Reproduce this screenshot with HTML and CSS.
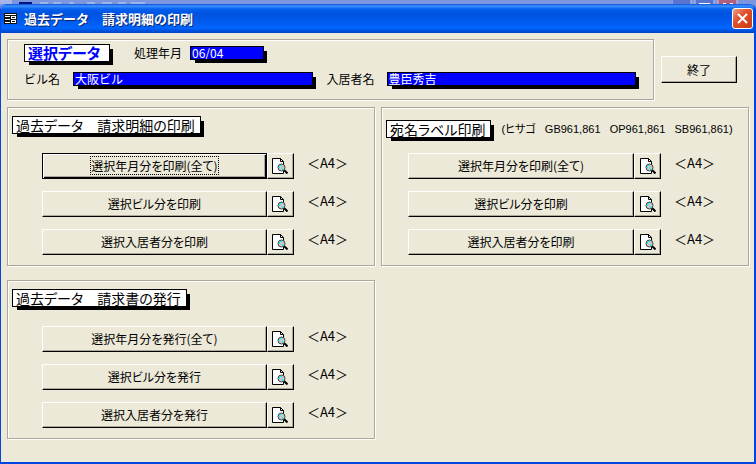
FILE: index.html
```
<!DOCTYPE html>
<html lang="ja">

<head>
    <meta charset="UTF-8">
    <meta name="viewport" content="width=device-width, initial-scale=1.0">
    <title>過去データ 請求明細の印刷</title>
    <link rel="stylesheet" href="styles.css">
</head>

<body>
    <!-- shared icon -->
    <svg class="defs" width="0" height="0">
        <symbol id="preview" viewBox="0 0 16 16">
            <path d="M.5.5h8l3 3v12H.5z" fill="#fff" stroke="#000" />
            <path d="M8.5.5v3h3" fill="none" stroke="#000" />
            <path d="M12 12l3.500 3.500" stroke="#000" stroke-width="2" />
            <circle cx="9.500" cy="9.500" r="3.500" fill="#c8c8c8" stroke="#404040" />
            <path d="M8 7h2v1H8zM7 8h1v2H7zM10 10h1v2h-1z" fill="#00ffff" />
        </symbol>
    </svg>

    <div class="back">
        <svg width="100%" height="4">
            <rect width="12" height="4" fill="#a6b4e8" />
            <rect x="19" y="2" width="13" height="2" fill="#00157f" />
            <path d="M40 3h8M53 3h8M69 3h5M87 3h8M102 3h10M118 3h8M131 3h14" stroke="#c4d0f4" />
        </svg>
        <svg class="back_buttons" width="84" height="4">
            <rect x="0" y="-2" width="19" height="8" fill="#5a73d0" stroke="#b4c2f0" />
            <rect x="23" y="-2" width="19" height="8" fill="#5a73d0" stroke="#b4c2f0" />
            <rect x="46" y="-2" width="19" height="8" fill="#b0607e" stroke="#d8c0dc" />
            <path d="M27 3.500h11M51 3.500h3M58 3.500h3" stroke="#fff" />
        </svg>
    </div>

    <div class="window">
        <div class="titlebar">
            <svg width="13" height="11" viewBox="0 0 13 11">
                <path d="M0 0h13v11H0z" fill="#111" />
                <path d="M1 1h11v1H1zM1 3h5v1H1zM1 6h5v1H1zM1 9h5v1H1zM7 3h5v1H7zM7 5h5v1H7zM7 7h5v1H7zM7 9h5v1H7zM7 3h1v3H7zM11 3h1v3h-1zM7 7h1v3H7zM11 7h1v3h-1z" fill="#fff" />
            </svg>
            <h1>過去データ　請求明細の印刷</h1>
            <button class="close" aria-label="閉じる">
                <svg width="19" height="19" viewBox="0 0 19 19">
                    <path d="M5 5l9 9M14 5l-9 9" stroke="#fff" stroke-width="2" />
                </svg>
            </button>
        </div>

        <div class="body">
            <div class="top">
                <div class="frame select">
                    <div class="line">
                        <h2 class="tag blue">選択データ</h2>
                        <label for="month">処理年月</label>
                        <input class="month" id="month" type="text" value="06/04" readonly>
                    </div>
                    <div class="line">
                        <label class="bill_label" for="bill">ビル名</label>
                        <input class="bill" id="bill" type="text" value="大阪ビル" readonly>
                        <label class="tenant_label" for="tenant">入居者名</label>
                        <input class="tenant" id="tenant" type="text" value="豊臣秀吉" readonly>
                    </div>
                </div>
                <button class="exit">終了</button>
            </div>

            <div class="panels">
                <div class="frame panel">
                    <div class="head">
                        <h2 class="tag">過去データ　請求明細の印刷</h2>
                    </div>
                    <div class="row">
                        <button class="main focused"><span>選択年月分を印刷(全て)</span></button>
                        <button class="view" aria-label="プレビュー"><svg width="16" height="16"><use href="#preview" /></svg></button>
                        <span class="size">＜A4＞</span>
                    </div>
                    <div class="row">
                        <button class="main">選択ビル分を印刷</button>
                        <button class="view" aria-label="プレビュー"><svg width="16" height="16"><use href="#preview" /></svg></button>
                        <span class="size">＜A4＞</span>
                    </div>
                    <div class="row">
                        <button class="main">選択入居者分を印刷</button>
                        <button class="view" aria-label="プレビュー"><svg width="16" height="16"><use href="#preview" /></svg></button>
                        <span class="size">＜A4＞</span>
                    </div>
                </div>

                <div class="frame panel label_panel">
                    <div class="head">
                        <h2 class="tag">宛名ラベル印刷</h2>
                        <p class="note">(ヒサゴ&nbsp;&nbsp; GB961,861&nbsp;&nbsp; OP961,861&nbsp;&nbsp; SB961,861)</p>
                    </div>
                    <div class="row">
                        <button class="main">選択年月分を印刷(全て)</button>
                        <button class="view" aria-label="プレビュー"><svg width="16" height="16"><use href="#preview" /></svg></button>
                        <span class="size">＜A4＞</span>
                    </div>
                    <div class="row">
                        <button class="main">選択ビル分を印刷</button>
                        <button class="view" aria-label="プレビュー"><svg width="16" height="16"><use href="#preview" /></svg></button>
                        <span class="size">＜A4＞</span>
                    </div>
                    <div class="row">
                        <button class="main">選択入居者分を印刷</button>
                        <button class="view" aria-label="プレビュー"><svg width="16" height="16"><use href="#preview" /></svg></button>
                        <span class="size">＜A4＞</span>
                    </div>
                </div>

                <div class="frame panel">
                    <div class="head">
                        <h2 class="tag">過去データ　請求書の発行</h2>
                    </div>
                    <div class="row">
                        <button class="main">選択年月分を発行(全て)</button>
                        <button class="view" aria-label="プレビュー"><svg width="16" height="16"><use href="#preview" /></svg></button>
                        <span class="size">＜A4＞</span>
                    </div>
                    <div class="row">
                        <button class="main">選択ビル分を発行</button>
                        <button class="view" aria-label="プレビュー"><svg width="16" height="16"><use href="#preview" /></svg></button>
                        <span class="size">＜A4＞</span>
                    </div>
                    <div class="row">
                        <button class="main">選択入居者分を発行</button>
                        <button class="view" aria-label="プレビュー"><svg width="16" height="16"><use href="#preview" /></svg></button>
                        <span class="size">＜A4＞</span>
                    </div>
                </div>
            </div>
        </div>
    </div>
</body>

</html>
```
FILE: styles.css
```
* {
    box-sizing: border-box;
}

body {
    margin: 0;
    min-height: 100vh;
    display: flex;
    flex-direction: column;
    background-color: #7b96df;
    color: #000;
    font-family: "Noto Sans CJK JP", sans-serif;
    font-size: 12px;
    line-height: 14px;
}

h1,
h2,
p {
    margin: 0;
    white-space: nowrap;
}

button,
input {
    font: inherit;
    color: inherit;
}

.defs {
    position: absolute;
}

.back {
    display: flex;
    height: 4px;
}

.back_buttons {
    flex: none;
}

.window {
    flex: 1;
    display: flex;
    flex-direction: column;
    border: solid #0046e0;
    border-width: 0 2px 2px 1px;
    border-radius: 6px 6px 0 0;
    background-color: #ece9d8;
    overflow: hidden;
}

.titlebar {
    display: flex;
    align-items: center;
    height: 29px;
    padding: 0 1px 0 3px;
    background: linear-gradient(#0a4fd8, #3c92ff 2px, #0560f0 5px, #0053e1 9px, #0058ea 16px, #0066ff 24px, #0050dc 27px, #0040c8);
}

.titlebar h1 {
    flex: 1;
    margin-left: 7px;
    color: #fff;
    font-size: 13px;
    font-weight: bold;
    text-shadow: 1px 1px #0a246a;
}

.close {
    display: flex;
    width: 21px;
    height: 21px;
    padding: 0;
    border: 1px solid #fff;
    border-radius: 3px;
    background: linear-gradient(135deg, #f0a088, #e0512c 40%, #c83a10);
}

.body {
    flex: 1;
    padding: 6px 5px 20px 6px;
}

.frame {
    border: 1px solid #aca899;
    box-shadow: inset 1px 1px #fff, 1px 1px #fff;
}

.top {
    display: flex;
    align-items: center;
    gap: 7px;
    padding-right: 12px;
}

.select {
    flex: 1;
    padding: 4px 17px 11px 16px;
}

.line {
    display: flex;
    align-items: center;
    height: 18px;
}

.line + .line {
    margin-top: 8px;
}

.line label {
    white-space: nowrap;
}

.tag {
    height: 18px;
    padding: 0 5px 0 3px;
    border: 1px solid #000;
    background-color: #fff;
    box-shadow: 4px 4px 0 -1px #000;
    font-size: 14px;
    line-height: 16px;
    font-weight: normal;
    font-feature-settings: "palt";
}

.blue {
    width: 86px;
    margin-right: 24px;
    color: #0000ff;
    font-size: 15px;
    font-weight: bold;
}

.line input {
    height: 14px;
    padding: 0 1px 2px;
    border: 1px solid #000;
    border-radius: 0;
    outline: none;
    background-color: #0000ff;
    box-shadow: 4px 4px 0 -1px #000;
    color: #fff;
    line-height: 10px;
}

.line .month {
    width: 74px;
    margin-left: 8px;
}

.bill_label {
    width: 49px;
}

.bill {
    flex: 239;
    min-width: 0;
}

.tenant_label {
    margin-left: 14px;
    width: 60px;
}

.tenant {
    flex: 249;
    min-width: 0;
}

.exit,
.main,
.view {
    height: 26px;
    padding: 0;
    border: 1px solid;
    border-color: #fff #000 #000 #fff;
    border-radius: 0;
    background-color: #ece9d8;
    box-shadow: inset -1px -1px #aca899;
    font-feature-settings: "palt";
}

.exit {
    width: 76px;
    height: 27px;
}

.panels {
    display: grid;
    grid-template-columns: repeat(2, minmax(0, 1fr));
    gap: 14px 6px;
    margin-top: 7px;
}

.panel {
    height: 159px;
    padding: 7px 26px 0 34px;
}

.head {
    display: flex;
    align-items: center;
    height: 20px;
    margin: 0 -25px 18px -30px;
}

.label_panel {
    padding-left: 26px;
}

.label_panel .head {
    height: 28px;
    margin: 0 -25px 10px -22px;
}

.note {
    margin-left: 10px;
    font-family: "Liberation Sans", "Noto Sans CJK JP", sans-serif;
    font-size: 11px;
    font-feature-settings: "palt";
}

.row {
    display: flex;
    align-items: center;
}

.row + .row {
    margin-top: 12px;
}

.main {
    flex: 1;
    max-width: 226px;
}

.focused {
    border: 1px solid #000;
    box-shadow: inset 1px 1px #fff, inset -1px -1px #000, inset -2px -2px #aca899;
}

.focused span {
    outline: 1px dotted #000;
}

.view {
    display: flex;
    align-items: center;
    justify-content: center;
    width: 27px;
}

.size {
    margin: -6px 0 0 13px;
    white-space: nowrap;
    font-size: 13px;
}
```
